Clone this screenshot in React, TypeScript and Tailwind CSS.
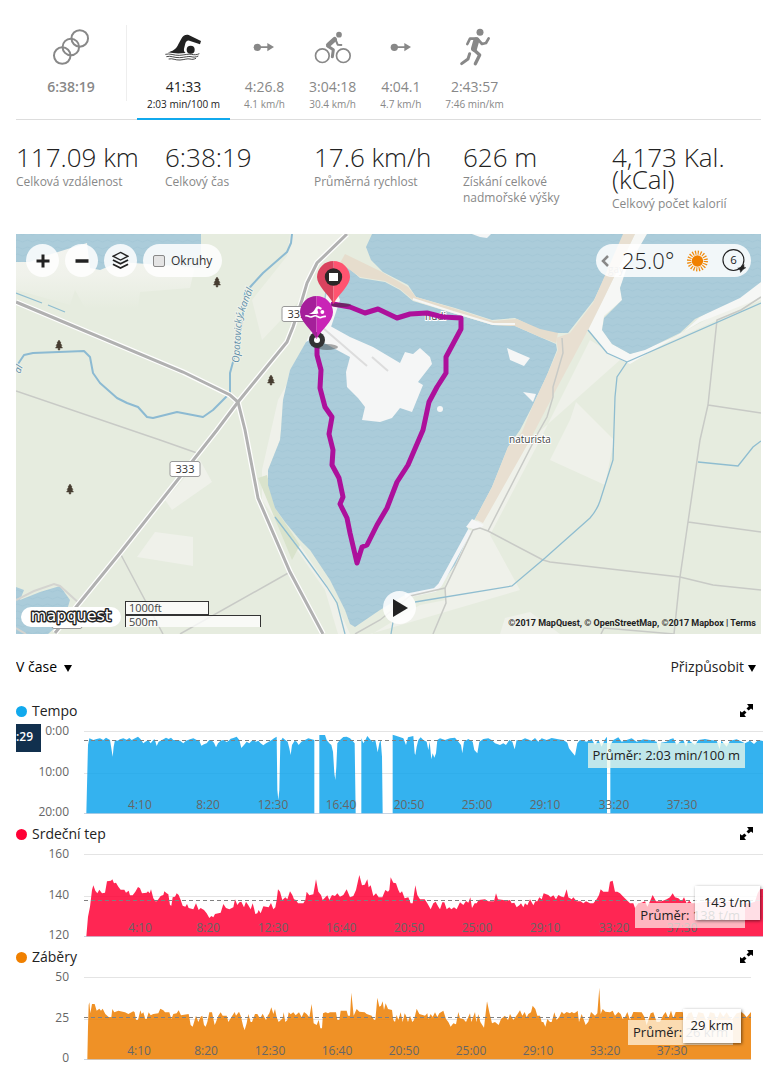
import type { ReactNode } from 'react';

const TEMPO: string[] = [
  '259,370 264,165 268,145 280,150 290,147 300,145 310,150 318,143 330,150 334,175 338,200 341,170 345,150 352,152 360,148 370,145 380,149 388,144 395,150 405,145 414,140 422,148 430,160 436,155 445,150 452,160 460,150 464,148 470,168 476,155 482,152 490,148 498,143 506,147 513,143 520,150 530,150 540,152 550,160 558,152 570,148 580,145 590,150 598,152 604,167 612,163 620,160 628,150 636,152 642,158 648,172 654,160 662,152 670,150 680,156 686,152 692,146 700,144 710,140 718,150 724,174 732,165 740,155 748,160 758,150 768,155 775,152 782,160 790,166 798,160 806,155 815,150 822,145 830,140 832,300 835,330 838,300 841,155 848,143 856,150 863,155 868,175 872,195 876,165 884,152 890,155 896,165 904,155 915,150 925,145 935,148 943,150 943,370',
  '958,370 958,135 975,135 980,150 988,160 994,165 999,185 1003,250 1006,270 1009,230 1012,160 1020,150 1030,141 1040,140 1050,145 1060,155 1064,160 1067,370',
  '1084,370 1084,145 1090,160 1096,150 1102,138 1110,148 1118,155 1126,150 1130,170 1133,187 1138,160 1142,150 1146,200 1148,370',
  '1178,370 1178,134 1190,138 1210,145 1218,165 1224,142 1240,138 1244,190 1246,195 1250,170 1255,150 1262,142 1270,150 1280,155 1285,180 1289,155 1294,208 1298,190 1303,203 1308,190 1312,150 1320,145 1335,150 1350,145 1365,143 1375,155 1383,165 1387,190 1392,155 1405,147 1418,155 1423,180 1432,190 1438,155 1450,147 1465,145 1475,150 1485,160 1500,165 1510,160 1518,165 1528,150 1537,155 1544,178 1550,150 1560,152 1575,145 1595,152 1605,144 1615,155 1625,145 1640,150 1655,144 1675,148 1690,150 1702,158 1707,175 1715,185 1725,197 1732,160 1740,150 1760,155 1775,147 1785,165 1795,150 1805,170 1815,148 1821,140 1821,370',
  '1831,370 1831,165 1840,150 1855,142 1865,155 1880,150 1895,145 1910,155 1930,148 1950,150 1970,155 1978,185 1983,158 2000,155 2010,148 2020,145 2030,165 2040,155 2050,150 2058,170 2065,150 2085,165 2095,150 2115,147 2130,150 2150,152 2159,178 2164,152 2180,170 2190,152 2210,148 2235,160 2250,152 2262,162 2275,150 2289,153 2289,370',
];

const HEART: string[] = [
  '259,289 264,230 270,200 276,150 280,136 286,152 292,160 298,149 306,160 315,158 321,124 333,122 337,118 342,130 348,128 355,140 362,149 373,149 378,158 386,152 390,166 398,166 406,155 414,141 420,145 426,160 440,158 444,154 449,160 453,148 460,175 468,185 475,178 482,168 490,165 493,154 500,160 505,163 510,195 514,197 518,172 525,170 530,160 536,165 542,180 548,197 556,200 561,192 566,204 580,208 588,190 596,210 602,204 612,210 620,220 628,234 634,228 640,232 645,222 662,218 670,192 678,204 688,208 700,202 705,178 712,195 718,187 724,185 732,202 738,185 745,196 752,208 758,190 762,205 766,222 772,220 776,210 782,220 790,199 806,202 813,189 820,208 826,202 830,180 834,148 840,155 847,180 856,172 862,178 870,154 877,165 882,178 888,180 894,190 910,190 916,180 920,155 928,166 940,163 948,118 955,155 963,165 968,180 982,166 988,180 996,165 1005,168 1012,160 1020,170 1030,165 1040,148 1050,172 1060,168 1068,150 1078,105 1086,136 1094,134 1102,118 1106,142 1112,136 1120,168 1128,160 1136,172 1147,172 1156,150 1164,155 1168,150 1172,112 1180,128 1188,130 1195,150 1200,160 1206,154 1214,175 1225,172 1232,190 1238,190 1246,136 1252,165 1260,178 1274,178 1282,190 1292,208 1300,190 1307,185 1315,200 1320,208 1327,187 1333,187 1340,208 1348,202 1354,208 1362,202 1370,208 1380,187 1390,195 1398,183 1405,188 1411,172 1416,204 1424,190 1430,190 1436,180 1455,178 1465,184 1482,184 1488,160 1494,178 1510,180 1518,184 1530,180 1535,190 1543,188 1550,202 1558,196 1563,190 1570,202 1575,190 1582,196 1590,178 1600,196 1606,184 1612,184 1618,172 1625,178 1631,160 1645,165 1652,172 1660,166 1668,178 1675,165 1685,170 1692,172 1700,148 1705,172 1715,178 1720,172 1730,184 1742,184 1750,190 1758,184 1770,190 1780,190 1790,178 1797,165 1802,148 1810,155 1825,155 1830,125 1838,122 1845,155 1852,155 1860,160 1870,170 1880,180 1890,190 1900,190 1905,204 1915,190 1925,188 1935,184 1942,200 1950,184 1958,165 1968,184 1985,184 2000,178 2010,172 2018,160 2025,172 2035,175 2045,184 2052,172 2060,190 2068,182 2075,190 2085,190 2140,185 2200,188 2250,190 2265,185 2273,160 2280,148 2289,147 2289,289',
];

const STROKES: string[] = [
  '262,658 264,560 266,495 268,487 271,520 276,492 284,492 290,512 298,506 303,512 308,506 316,522 326,531 334,531 337,507 343,517 355,512 375,517 385,522 400,514 404,517 408,540 414,540 421,511 425,522 430,517 436,537 440,537 446,517 452,526 460,522 475,520 481,506 490,511 495,517 508,517 514,537 520,522 530,520 536,511 543,526 566,522 572,555 578,560 588,527 595,546 602,530 607,527 612,555 617,560 622,546 628,517 636,517 644,555 648,546 655,527 662,517 668,527 680,527 685,546 694,532 704,516 708,527 717,515 722,527 730,560 734,570 740,550 745,522 752,546 756,546 765,522 772,522 780,536 788,521 798,541 803,527 808,520 814,502 820,522 825,507 830,532 836,546 848,535 851,517 856,546 862,540 866,517 872,523 880,517 887,526 897,517 905,532 912,516 920,522 928,532 935,492 941,550 950,555 956,540 961,565 966,565 969,520 977,517 984,520 990,517 1008,517 1012,540 1018,540 1022,512 1040,512 1044,527 1050,527 1054,458 1061,527 1070,507 1078,515 1094,517 1100,522 1115,527 1122,540 1126,540 1132,473 1138,500 1143,497 1148,484 1152,510 1157,490 1164,507 1176,510 1180,540 1185,546 1190,525 1195,540 1202,517 1208,546 1214,520 1218,527 1224,546 1230,527 1237,546 1242,540 1250,506 1258,522 1275,527 1282,520 1285,537 1292,522 1298,531 1305,517 1312,531 1318,520 1330,512 1338,537 1345,546 1352,560 1360,550 1368,553 1375,516 1380,535 1390,537 1398,546 1410,520 1414,546 1425,516 1429,546 1435,523 1441,546 1452,563 1461,484 1468,517 1476,550 1485,546 1496,555 1503,537 1515,527 1524,541 1530,522 1540,540 1553,522 1560,511 1567,527 1574,516 1580,532 1585,522 1593,517 1598,497 1606,507 1612,527 1620,527 1625,546 1630,546 1636,560 1642,537 1650,546 1655,546 1663,517 1670,540 1678,530 1685,515 1692,522 1700,516 1710,520 1715,516 1722,520 1728,517 1733,512 1737,546 1745,522 1757,555 1765,545 1773,516 1785,527 1792,520 1798,443 1802,522 1808,507 1816,515 1830,517 1838,512 1845,527 1855,516 1862,522 1868,537 1875,531 1882,516 1890,540 1900,516 1925,517 1933,530 1940,555 1952,520 1960,517 1970,546 1980,545 1990,525 1997,516 2005,535 2013,512 2020,535 2027,516 2048,516 2055,546 2065,520 2075,517 2085,545 2095,517 2110,520 2120,546 2130,517 2143,520 2150,540 2160,515 2170,530 2180,517 2195,540 2210,520 2225,517 2232,522 2240,532 2253,516 2253,658',
];

const TIMES = ['4:10', '8:20', '12:30', '16:40', '20:50', '25:00', '29:10', '33:20', '37:30'];
const WIDE_TICKS = [56, 124, 189, 257, 325, 393, 461, 530, 598];
const NARROW_TICKS = [55, 122, 186, 253, 320, 387, 454, 521, 588];

function ExpandIcon() {
  return (
    <svg viewBox="0 0 13 13" className="h-[13px] w-[13px]" aria-hidden="true">
      <path d="M7 0h6v6l-2-1.6L8.600 6.600 6.500 4.400 8.800 2.200z" fill="#000" />
      <path d="M0 7l2 1.600L4.400 6.400 6.500 8.600 4.200 10.800 6 13H0z" fill="#000" />
    </svg>
  );
}

interface ChartProps {
  title: string;
  dot: string;
  color: string;
  opacity: number;
  series: string[];
  originY: number;
  width: number;
  averageY: number;
  yLabels: string[];
  ticks: number[];
  plotClass: string;
  children: ReactNode;
  badge?: ReactNode;
}

function Chart(p: ChartProps) {
  const w = p.width * 3;
  return (
    <section className="mb-[10px]">
      <header className="flex h-5 items-center justify-between pr-2">
        <h2 className="flex items-center gap-[5px] text-[14px] leading-5 text-[#222]">
          <span className={`h-[11px] w-[11px] rounded-full ${p.dot}`} />
          {p.title}
        </h2>
        <button type="button" className="pb-[2px]" aria-label={`Zvětšit ${p.title}`}>
          <ExpandIcon />
        </button>
      </header>
      <div className="relative mt-[10px] flex items-start gap-[15px]">
        <div className="-my-2 flex h-[97px] w-[53px] flex-col justify-between text-right text-[12px] leading-4 text-[#666]">
          {p.yLabels.map((l) => (
            <span key={l}>{l}</span>
          ))}
        </div>
        {p.badge}
        <div className={`relative h-[83px] min-w-0 flex-1 ${p.plotClass}`}>
          <svg viewBox={`0 0 ${w} 249`} preserveAspectRatio="none" className="block h-full w-full" aria-hidden="true">
            <g shapeRendering="crispEdges" strokeWidth="3">
              <path d={`M0 1.500H${w}M0 127.500H${w}`} stroke="#e4e4e4" />
              <path d={`M0 247.500H${w}`} stroke="#c9d5e4" />
            </g>
            <g transform={`translate(-252 ${-p.originY})`} fill={p.color} fillOpacity={p.opacity}>
              {p.series.map((s) => (
                <polygon key={s} points={s} />
              ))}
            </g>
            <path
              d={`M0 ${p.averageY}H${w}`}
              stroke="#808080"
              strokeWidth="3"
              strokeDasharray="12 9"
              shapeRendering="crispEdges"
            />
          </svg>
          {TIMES.map((t, i) => (
            <span
              key={t}
              className="absolute top-[66px] -translate-x-1/2 text-[12px] leading-4 text-[#666]"
              style={{ left: `${(p.ticks[i] / p.width) * 100}%` }}
            >
              {t}
            </span>
          ))}
          {p.children}
        </div>
      </div>
    </section>
  );
}

function RingsIcon() {
  return (
    <svg viewBox="155 54 115 114" className="h-[38px] w-[38px]" fill="none" stroke="#888" strokeWidth="6">
      <circle cx="186" cy="137" r="25" />
      <circle cx="212" cy="111" r="25" />
      <circle cx="239" cy="85" r="25" />
    </svg>
  );
}

function SwimIcon() {
  return (
    <svg viewBox="494 54 114 114" className="h-[38px] w-[38px]">
      <path d="M505 127c14-2 26-10 32-24l9-17c5-9 12-13 22-11l37 18-3 10-32-11c-7-1-11 3-13 12l-3 12c-1 6 1 10 5 13-18 2-36 2-54-2z" fill="#222" />
      <circle cx="574" cy="119" r="12" fill="#222" />
      <path
        d="M498 133c14-4 26 4 42 3s28-5 36-3 16 2 24-2M501 140c14-4 24 4 40 3s26-5 34-3 14 2 22-2M508 147c12-3 20 4 34 3s22-5 30-3 10 1 18-2"
        fill="none"
        stroke="#222"
        strokeWidth="2.500"
      />
    </svg>
  );
}

function TransitionIcon() {
  return (
    <svg viewBox="738 54 114 114" className="h-[38px] w-[38px]" fill="#888">
      <circle cx="775" cy="112" r="11" />
      <path d="M780 109h25v-10l20 12-20 13v-10h-25z" />
    </svg>
  );
}

function BikeIcon() {
  return (
    <svg viewBox="944 54 114 114" className="h-[38px] w-[38px]" fill="none" stroke="#888">
      <circle cx="969" cy="137" r="20.500" strokeWidth="5" />
      <circle cx="1032" cy="137" r="20.500" strokeWidth="5" />
      <circle cx="1019" cy="74" r="8.500" fill="#888" stroke="none" />
      <path d="M987 105l19-17" strokeWidth="14" strokeLinecap="round" />
      <path d="M985 108l17 11-3 21" strokeWidth="9" strokeLinecap="round" strokeLinejoin="round" />
      <path d="M1008 87l7 17 11 1" strokeWidth="6" strokeLinecap="round" strokeLinejoin="round" />
    </svg>
  );
}

function RunIcon() {
  return (
    <svg viewBox="473 54 114 114" className="h-[38px] w-[38px]" fill="none" stroke="#888" strokeLinecap="round" strokeLinejoin="round">
      <circle cx="545" cy="67" r="10.500" fill="#888" stroke="none" />
      <path d="M534 91l-7 25" strokeWidth="18" />
      <path d="M507 102l8-16 22 0 14 16 12-3 8-14" strokeWidth="8" />
      <path d="M525 118l19 17-13 26" strokeWidth="10" />
      <path d="M514 131l-5 16-19 14" strokeWidth="9" />
    </svg>
  );
}

const LEGS = [
  { icon: <SwimIcon />, time: '41:33', pace: '2:03 min/100 m', active: true },
  { icon: <TransitionIcon />, time: '4:26.8', pace: '4.1 km/h', active: false },
  { icon: <BikeIcon />, time: '3:04:18', pace: '30.4 km/h', active: false },
  { icon: <TransitionIcon />, time: '4:04.1', pace: '4.7 km/h', active: false },
  { icon: <RunIcon />, time: '2:43:57', pace: '7:46 min/km', active: false },
];

const STATS = [
  ['117.09 km', 'Celková vzdálenost'],
  ['6:38:19', 'Celkový čas'],
  ['17.6 km/h', 'Průměrná rychlost'],
  ['626 m', 'Získání celkové nadmořské výšky'],
  ['4,173 Kal. (kCal)', 'Celkový počet kalorií'],
];

function Tree({ x, y }: { x: number; y: number }) {
  return (
    <path
      transform={`translate(${x} ${y})`}
      d="M0-5l2 3H1.200L3 .500H1.700L3.500 3H.800v2H-.800V3h-2.700L-1.700.500H-3L-1.200-2H-2z"
      fill="#463c30"
      stroke="#463c30"
      strokeWidth=".5"
    />
  );
}

function Shield({ x, y, label }: { x: number; y: number; label?: string }) {
  return (
    <g transform={`translate(${x} ${y})`}>
      <rect x="-15" y="-7.500" width="30" height="15" rx="2" fill="#fff" stroke="#999" />
      {label && (
        <text y="4" textAnchor="middle" fontSize="11" fill="#333">
          {label}
        </text>
      )}
    </g>
  );
}

function MapDrawing() {
  return (
    <svg
      viewBox="16 234 745 400"
      preserveAspectRatio="xMidYMid slice"
      className="block h-full w-full"
      fontFamily='"Open Sans", sans-serif'
      role="img"
      aria-label="Mapa trasy"
    >
      <defs>
        <pattern id="water" width="10" height="7" patternUnits="userSpaceOnUse">
          <rect width="10" height="7" fill="#abccda" />
          <path d="M0 3q2.500 2 5 0t5 0" fill="none" stroke="#a5c8d7" />
        </pattern>
        <linearGradient id="fade" x1="0" y1="0" x2="0" y2="1">
          <stop offset="0" stopColor="#f3f4f0" />
          <stop offset=".5" stopColor="#f0f2eb" />
          <stop offset="1" stopColor="#e6ecdf" />
        </linearGradient>
      </defs>
      <rect x="16" y="234" width="745" height="400" fill="#e6ecdf" />
      <polygon points="16,240 201,240 190,288 140,292 138,309 85,308 75,290 70,305 16,290" fill="url(#fade)" />
      <polygon points="290,234 345,234 317,262 300,300 262,340 252,300 287,256" fill="#edf0e7" />
      <g fill="#eff1ea">
        <polygon points="155,532 193,537 193,566 137,557" />
        <polygon points="200,460 212,482 172,510 165,500" />
        <polygon points="576,402 614,440 605,485 550,460 570,420" />
        <polygon points="320,325 290,370 283,400 280,440 268,470 268,485 275,510 300,545 330,590 350,634 372,634 420,605 446,600 445,585 470,532 530,440 620,360 650,350 761,290 761,300 625,362 590,340 555,410 540,440 490,535 520,590 370,634 338,634 325,590 262,500 262,470 278,400" />
        <polygon points="505,618 530,612 560,634 500,634" />
      </g>
      <polygon points="258,478 267,475 275,508 300,545 292,560" fill="#d9e3cc" />
      <polygon points="16,234 201,234 201,268 120,262 100,270 90,268 87,243 45,256 30,262 16,262" fill="url(#water)" />
      <polygon points="16,587 24,590 20,600 40,592 60,586 70,600 64,620 48,634 16,634" fill="url(#water)" />
      <path d="M16 600l18-9 20-7 6 2 20 18M16 628l10 6" fill="none" stroke="#d4d4d0" strokeWidth="2" />
      <polygon points="372,234 366,247 371,260 383,272 408,285 416,297 455,308 492,320 515,318 545,333 568,333 594,300 625,234" fill="url(#water)" />
      <polygon points="330,262 345,265 360,278 385,282 400,290 413,301 453,313 493,325 515,326 540,337 556,344 557,350 547,375 533,405 520,430 508,447 492,487 475,519 467,527 470,532 455,565 440,585 437,590 405,595 380,610 355,627 350,624 345,610 330,580 310,550 300,540 285,522 275,508 268,485 268,470 280,440 281,430 283,400 290,370 306,342 320,325" fill="url(#water)" />
      <polygon points="635,234 647,234 630,265 620,288 622,300 604,316 602,330 612,344 630,354 645,349 680,335 700,317 761,282 761,298 700,322 630,364 608,354 588,330" fill="#f6f7f5" />
      <polygon points="647,234 761,234 761,282 740,298 695,319 680,333 645,350 630,354 612,344 602,330 604,318 622,300 620,288 626,270" fill="url(#water)" />
      <polygon points="345,254 380,271 408,287 416,297 453,308 493,321 517,319 540,329 558,333 556,343 540,337 515,326 493,325 453,313 413,300 400,289 385,281 360,277 340,263" fill="#e6ddcd" />
      <path d="M413 299l40 13 40 12h22" fill="none" stroke="#f6f7f5" strokeWidth="2" />
      <polygon points="623,234 635,234 603,300 588,330 557,388 530,440 483,523 475,519 492,487 508,447 522,432 533,405 547,375 558,350 556,338 570,333 593,303" fill="#e8dfd1" />
      <g fill="#f5f6f6">
        <polygon points="323,322 350,337 373,347 400,363 405,352 413,354 420,348 430,357 432,364 418,382 423,385 412,412 400,408 392,418 380,422 362,420 365,407 358,398 347,387 346,372 350,357 313,337" />
        <polygon points="507,348 530,358 524,366 510,360" />
        <polygon points="523,392 536,394 533,402" />
        <polygon points="472,234 491,234 487,238 480,237" />
        <circle cx="440" cy="409" r="3" />
        <polygon points="325,302 330,275 340,300 330,330 318,335 306,342" />
        <polygon points="472,519 484,525 478,530 466,527" />
      </g>
      <path d="M323 328l44 38M372 357l16 14" stroke="#ddd" strokeWidth="2" />
      <path d="M470 530l-30 55-5 5-30 6" fill="none" stroke="#f3f5f6" strokeWidth="4" />
      <g fill="none" stroke="#c8cac6" strokeWidth="1.500">
        <path d="M16 391l144 49 37 13M120 553l43 81M290 572L180 634" />
        <path d="M761 297l-20 13-24 10-9 85-8 35-12 82-8 55-6 57M708 405l53 8M688 522l73 10" />
        <path d="M355 634l25-14 30-24 35-8 28-58 7-2 8 3 55 29 7 2 130 15 33 8 48 5" />
        <path d="M488 531l50-98 9-16 6-20v-10l10-34-1-15M445 588l1 15-13 31M601 634l3-6 70 6" />
      </g>
      <g fill="none" stroke="#8fbdd0" strokeWidth="1.300">
        <path d="M415 602l97-16 33-28 45-40q7-8 10-17l13-41 2-63 2-20 10-15 134-59M627 362l-20-9-19-23M698 462l40 4 15-19 8-6M275 517l25 33 27 37 10 16 8 31M391 634l2-12" />
        <path d="M16 293l26 10M48 305l17 7" />
      </g>
      <path
        d="M292 234l-1 9-4 9-24 21-11 12-7 8-3 30-9 39-3 11v20l-17 17-10 7-26-5-24 6-6-1-9-10-11-4-10-5-17-15-7-10-3-16-6-6-51 2-9 2-8 12"
        fill="none"
        stroke="#8cbad2"
        strokeWidth="2"
        strokeLinejoin="round"
      />
      <g fill="none" stroke="#fff" strokeWidth="5.500">
        <path d="M16 302l167 70 47 23 8 7 7 28 13 68 32 74 33 62" />
        <path d="M347 234l-30 29-10 20-5 17-9 27-6 15-49 60-21 28-97 123-65 80" />
      </g>
      <g fill="none" stroke="#b1b1b1" strokeWidth="3">
        <path d="M16 302l167 70 47 23 8 7 7 28 13 68 32 74 33 62" />
        <path d="M347 234l-30 29-10 20-5 17-9 27-6 15-49 60-21 28-97 123-65 80" />
      </g>
      <Tree x={217} y={282} />
      <Tree x={59} y={345} />
      <Tree x={271} y={380} />
      <Tree x={70} y={489} />
      <Shield x={185} y={469} label="333" />
      <Shield x={297} y={314} label="333" />
      <Shield x={67} y={621} />
      <g fontSize="10" fill="#5f8ea8" stroke="#eef2ea" strokeWidth="2" paintOrder="stroke" fontStyle="italic">
        <path id="canal" d="M239 363L242 318 256 282" fill="none" stroke="none" />
        <text>
          <textPath href="#canal">Opatovický kanál</textPath>
        </text>
        <text transform="translate(20 374) rotate(-68)">ál</text>
      </g>
      <g fontSize="10" fill="#444" stroke="#fff" strokeWidth="2" paintOrder="stroke">
        <text x="509" y="443">naturista</text>
        <text x="425" y="320">nudi</text>
      </g>
      <text x="608" y="273" fontSize="10" fill="#aaa">gay</text>
      <polyline
        points="333,304 350,307 365,313 378,309 397,318 410,314 427,313 443,317 461,318 461,329 446,357 446,373 437,387 429,402 423,430 408,465 397,482 387,508 377,525 367,545 362,547 357,563 350,533 347,518 340,504 343,497 339,478 332,465 333,450 329,434 332,417 325,407 320,388 321,370 317,355 317,343"
        fill="none"
        stroke="#ad109b"
        strokeWidth="5"
        strokeLinejoin="round"
        strokeLinecap="round"
      />
      <ellipse cx="327" cy="347" rx="11" ry="3" fill="#333" opacity=".4" />
      <ellipse cx="341" cy="305" rx="10" ry="2" fill="#333" opacity=".5" />
      <path d="M333.500 304c-5-10-16.500-18-16.500-27a16.500 16.500 0 0 1 16.500-16z" fill="#d9435e" />
      <path d="M333.500 304c5-10 16.500-18 16.500-27a16.500 16.500 0 0 0-16.500-16z" fill="#ff5470" />
      <circle cx="333.500" cy="277" r="8.700" fill="#2b2727" />
      <rect x="329" y="273" width="9" height="8" fill="#fff" />
      <circle cx="317" cy="340" r="8" fill="#333" />
      <circle cx="317" cy="340" r="3" fill="#fff" />
      <path d="M316.500 339c-5-10-16.500-17-16.500-27a16.500 16.500 0 0 1 16.500-16z" fill="#a51f9a" />
      <path d="M316.500 339c5-10 16.500-17 16.500-27a16.500 16.500 0 0 0-16.500-16z" fill="#c924b6" />
      <g transform="translate(316.500 311.500) scale(.15) translate(-551 -113)">
        <path d="M500 126c16-2 28-8 36-22l9-14c6-10 14-14 24-10l18 10-6 12-16-8c-5 0-8 4-7 10l6 22c-20 4-44 6-64 0z" fill="#fff" />
        <circle cx="590" cy="116" r="13" fill="#fff" />
        <path d="M476 144c18-12 24 12 44 4s24-10 44 2 24-8 50-4" fill="none" stroke="#fff" strokeWidth="11" />
      </g>
    </svg>
  );
}

const round = 'flex h-[33px] w-[33px] items-center justify-center rounded-full bg-white/85 text-[#222]';

export default function App() {
  return (
    <main className="bg-white pt-[20px] pr-[18px] pl-4 font-['Open_Sans',sans-serif] text-[#222]">
      <nav className="flex h-[100px] items-start border-b border-[#ddd]">
        <button type="button" className="mt-[5px] flex h-[76px] w-[111px] flex-col items-center border-r border-[#eee] pt-[3px] text-[14px] font-semibold text-[#888]">
          <RingsIcon />
          <span className="mt-[11px] leading-5">6:38:19</span>
        </button>
        <div className="ml-[10px] flex gap-[4px]">
          {LEGS.map((l, i) => (
            <button
              key={i}
              type="button"
              className={
                l.active
                  ? 'flex h-[100px] flex-col items-center border-b-2 border-[#11a9ed] px-[10px] pt-[8px] text-[#222]'
                  : 'flex h-[99px] flex-col items-center px-[10px] pt-[8px] text-[#888]'
              }
            >
              {l.icon}
              <span className="mt-[11px] text-[14px] leading-5">{l.time}</span>
              <span className="text-[10px] leading-[14px] whitespace-nowrap">{l.pace}</span>
            </button>
          ))}
        </div>
      </nav>

      <dl className="mt-[26px] grid grid-cols-5">
        {STATS.map(([value, label]) => (
          <div key={label} className="flex flex-col-reverse justify-end pr-3">
            <dt className="mt-[6px] text-[12px] leading-4 text-[#888]">{label}</dt>
            <dd className="text-[26px] leading-[22px] font-light">{value}</dd>
          </div>
        ))}
      </dl>

      <div className="relative mt-[22px] h-[400px] overflow-hidden">
        <MapDrawing />
        <div className="absolute top-[10px] left-[10px] flex gap-[6px]">
          <button type="button" aria-label="Přiblížit" className={round}>
            <svg viewBox="0 0 14 14" className="h-[14px] w-[14px]"><path d="M7 .500v13M.500 7h13" stroke="currentColor" strokeWidth="3" /></svg>
          </button>
          <button type="button" aria-label="Oddálit" className={round}>
            <svg viewBox="0 0 14 14" className="h-[14px] w-[14px]"><path d="M.500 7h13" stroke="currentColor" strokeWidth="3.500" /></svg>
          </button>
          <button type="button" aria-label="Vrstvy" className={round}>
            <svg viewBox="0 0 18 20" className="h-[19px] w-[17px]" fill="none" stroke="currentColor" strokeWidth="1.500">
              <path d="M9 1.500L17 5.500 9 9.500 1 5.500z" />
              <path d="M1 9.500l8 4 8-4M1 14l8 4 8-4" strokeWidth="2" />
            </svg>
          </button>
          <label className="flex h-[33px] items-center gap-[6px] rounded-full bg-white/85 px-[10px] text-[12px] text-[#333]">
            <input type="checkbox" className="h-3 w-3 appearance-none rounded-xs border border-[#888] bg-[#e4e4e4]" />
            Okruhy
          </label>
        </div>

        <div className="absolute top-[10px] right-[10px] flex h-[33px] w-[155px] items-center rounded-full bg-white/85 pr-[4px] pl-[5px]">
          <button type="button" aria-label="Zpět">
            <svg viewBox="0 0 8 12" className="h-3 w-2" fill="none" stroke="#888" strokeWidth="2.500"><path d="M7 1L2 6l5 5" /></svg>
          </button>
          <span className="ml-[13px] text-[22px] font-light">25.0°</span>
          <svg viewBox="-12 -12 24 24" className="ml-[12px] h-6 w-6">
            <circle r="8.500" fill="none" stroke="#f08a0c" strokeWidth="5" strokeDasharray="1.200 1.470" />
            <circle r="6.500" fill="#fff" />
            <circle r="6" fill="#f08000" />
          </svg>
          <svg viewBox="-12 -12 26 26" className="ml-[13px] h-[26px] w-[26px]">
            <circle r="11" fill="none" stroke="#222" strokeWidth="1.200" />
            <text y="4" textAnchor="middle" fontSize="12" fill="#222">6</text>
            <path d="M11 4.500v3l2 .500-3 2-2.500 3-.500-2.500-2.500-2 3-.500z" fill="#222" stroke="#222" strokeWidth=".5" />
          </svg>
        </div>

        <button type="button" aria-label="Přehrát" className="absolute bottom-[10px] left-1/2 flex h-[33px] w-[33px] -translate-x-[6px] items-center justify-center rounded-full bg-white/85">
          <svg viewBox="0 0 15 18" className="ml-[2px] h-[18px] w-[15px]"><path d="M0 0l15 9-15 9z" fill="#222" /></svg>
        </button>

        <div className="absolute bottom-[7px] left-[5px] flex items-end gap-[4px]">
          <svg viewBox="0 0 100 20" className="h-5 w-[100px]">
            <rect width="100" height="20" rx="10" fill="#fff" />
            <text x="50" y="14" textAnchor="middle" fontFamily='"DejaVu Sans", sans-serif' fontSize="16" fill="#fff" stroke="#222" strokeWidth="2.800" strokeLinejoin="round" paintOrder="stroke">mapquest</text>
          </svg>
          <div className="text-[11px] leading-3 text-[#444]">
            <div className="h-[14px] w-[84px] border border-[#333] bg-white/75 pl-[3px]">1000ft</div>
            <div className="h-[12px] w-[136px] border border-b-0 border-[#333] bg-white/75 pl-[3px]">500m</div>
          </div>
        </div>
        <p className="absolute right-[5px] bottom-[5px] font-['Roboto',sans-serif] text-[9px] leading-3 font-bold text-[#222]">
          ©2017 MapQuest, © OpenStreetMap, ©2017 Mapbox | <a href="#terms">Terms</a>
        </p>
      </div>

      <div className="mt-[23px] mb-6 flex h-5 items-center justify-between pr-[5px] text-[14px] leading-5">
        <label className="flex items-center gap-[6px]">
          <select aria-label="Osa grafu" className="appearance-none bg-transparent text-black outline-none">
            <option>V čase</option>
          </select>
          <svg viewBox="0 0 8 7" className="mt-[3px] h-[7px] w-2"><path d="M0 0h8L4 7z" /></svg>
        </label>
        <button type="button" className="flex items-center gap-[4px]">
          Přizpůsobit
          <svg viewBox="0 0 8 7" className="mt-[3px] h-[7px] w-2"><path d="M0 0h8L4 7z" /></svg>
        </button>
      </div>

      <Chart
        title="Tempo"
        dot="bg-[#11a9ed]"
        color="#11a5ec"
        opacity={0.85}
        series={TEMPO}
        originY={123}
        width={679}
        averageY={28.5}
        yLabels={['0:00', '10:00', '20:00']}
        ticks={WIDE_TICKS}
        plotClass="-mr-[2px]"
        badge={
          <span className="absolute -top-[7px] left-0 h-7 w-[25px] bg-[#11304e] pr-2 text-right text-[12px] leading-[26px] font-semibold text-white">:29</span>
        }
      >
        <span className="absolute top-[12px] right-[18px] flex h-[25px] items-center bg-[#eef8ea]/75 px-[5px] text-[13px] whitespace-nowrap">
          Průměr: 2:03 min/100 m
        </span>
      </Chart>

      <Chart
        title="Srdeční tep"
        dot="bg-[#ff0035]"
        color="#ff0035"
        opacity={0.85}
        series={HEART}
        originY={42}
        width={679}
        averageY={139.5}
        yLabels={['160', '140', '120']}
        ticks={WIDE_TICKS}
        plotClass="-mr-[2px]"
      >
        <span className="absolute top-[49px] right-[18px] flex h-[25px] items-center bg-[#fff4f0]/70 px-[5px] text-[13px] whitespace-nowrap">
          Průměr: 138 t/m
        </span>
        <span className="absolute top-[32px] right-[3px] flex h-[34px] items-center bg-white/85 px-[9px] text-[13px] whitespace-nowrap shadow-[1px_1px_3px_#0008]">
          143 t/m
        </span>
      </Chart>

      <Chart
        title="Záběry"
        dot="bg-[#f08000]"
        color="#ec7e00"
        opacity={0.85}
        series={STROKES}
        originY={411}
        width={667}
        averageY={121.5}
        yLabels={['50', '25', '0']}
        ticks={NARROW_TICKS}
        plotClass="mr-[10px]"
      >
        <span className="absolute top-[43px] right-[18px] flex h-[25px] items-center bg-[#fff4e0]/75 px-[5px] text-[13px] whitespace-nowrap">
          Průměr: 26 krm
        </span>
        <span className="absolute top-[32px] right-[10px] flex h-[34px] items-center bg-white/90 px-[8px] text-[13px] whitespace-nowrap shadow-[1px_1px_3px_#0008]">
          29 krm
        </span>
      </Chart>
    </main>
  );
}
